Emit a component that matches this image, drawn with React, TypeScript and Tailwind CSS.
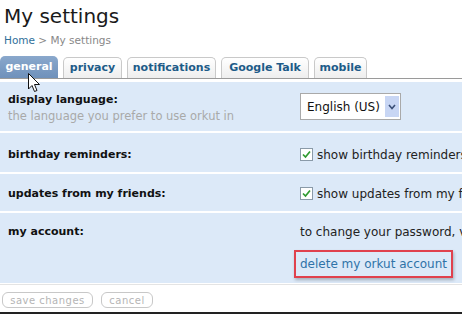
import React from 'react';

const tabs = [
  { name: 'general', w: 'w-[58px]' },
  { name: 'privacy', w: 'w-[59px]' },
  { name: 'notifications', w: 'w-[89px]' },
  { name: 'Google Talk', w: 'w-[88px]' },
  { name: 'mobile', w: 'w-[53px]' },
];

function Checkbox() {
  return (
    <span className="inline-flex items-center justify-center w-[13px] h-[13px] border border-[#8a9aa8] bg-white mr-[4px] shrink-0">
      <svg width="9" height="9" viewBox="0 0 9 9">
        <path d="M1 4.5 L3.5 7 L8 1.5" fill="none" stroke="#2f9a2f" strokeWidth="1.7" />
      </svg>
    </span>
  );
}

export default function App() {
  return (
    <div className="relative w-[462px] h-[314px] overflow-hidden bg-white font-['DejaVu_Sans',sans-serif] border-b-2 border-[#222]">
      {/* header */}
      <div className="pl-[4px] pt-[2px]">
        <h1 className="text-[20px] leading-[28px] text-[#1a1a1a]">My settings</h1>
        <div className="text-[10.5px] leading-[14px] mt-[3px] text-[#888]">
          <span className="text-[#2f6f9a]">Home</span> &gt; My settings
        </div>
      </div>

      {/* tabs */}
      <div className="flex items-end gap-[5px] mt-[9px] h-[23px] border-b border-[#9a9a9a]">
        {tabs.map((t, i) =>
          i === 0 ? (
            <div
              key={t.name}
              className={`${t.w} h-[22px] flex items-center justify-center rounded-t-[5px] bg-gradient-to-b from-[#8aa8cc] to-[#6f91bb] text-white font-bold text-[11px]`}
            >
              {t.name}
            </div>
          ) : (
            <div
              key={t.name}
              className={`${t.w} h-[21px] flex items-center justify-center rounded-t-[5px] border border-b-0 border-[#c9c9c9] bg-gradient-to-b from-white to-[#eeeeee] text-[#1d5b88] font-bold text-[11px]`}
            >
              {t.name}
            </div>
          )
        )}
      </div>

      {/* settings rows */}
      <div className="flex flex-col gap-[2px] mt-[3px] text-[11px]">
        <div className="flex h-[49px] bg-[#dce9f8]">
          <div className="w-[300px] shrink-0 pl-[8px] pt-[11px]">
            <div className="font-bold text-[#111] leading-[14px]">display language:</div>
            <div className="text-[#a9a9a9] text-[11.5px] leading-[15px] mt-[2px] whitespace-nowrap">the language you prefer to use orkut in</div>
          </div>
          <div className="pt-[11px]">
            <div className="flex items-center w-[101px] h-[27px] border border-[#a9a9a9] bg-white pl-[6px] pr-[1px]">
              <span className="text-[12px] text-[#111] flex-1">English (US)</span>
              <span className="w-[14px] h-[21px] bg-[#c8d6f4] flex items-center justify-center">
                <svg width="8" height="6" viewBox="0 0 8 6">
                  <path d="M1 1 L4 4.5 L7 1" fill="none" stroke="#3a4f78" strokeWidth="1.6" />
                </svg>
              </span>
            </div>
          </div>
        </div>

        <div className="flex h-[39px] bg-[#dce9f8]">
          <div className="w-[300px] shrink-0 pl-[8px] pt-[15px] font-bold text-[#111] leading-[14px]">birthday reminders:</div>
          <div className="pt-[15px] flex items-start whitespace-nowrap text-[#222] text-[12px] leading-[14px]">
            <Checkbox />
            show birthday reminders
          </div>
        </div>

        <div className="flex h-[37px] bg-[#dce9f8]">
          <div className="w-[300px] shrink-0 pl-[8px] pt-[13px] font-bold text-[#111] leading-[14px]">updates from my friends:</div>
          <div className="pt-[13px] flex items-start whitespace-nowrap text-[#222] text-[12px] leading-[14px]">
            <Checkbox />
            show updates from my friends
          </div>
        </div>

        <div className="flex h-[70px] bg-[#dce9f8]">
          <div className="w-[300px] shrink-0 pl-[8px] pt-[12px] font-bold text-[#111] leading-[14px]">my account:</div>
          <div className="pt-[12px] whitespace-nowrap leading-[14px] text-[12px]">
            <div className="text-[#222]">to change your password, visit your Google account</div>
            <div className="mt-[11px] -ml-[6px] inline-block border-2 border-[#e0414d] pl-[4px] pr-[4px] pt-[5px] pb-[5px] shadow-[1px_2px_3px_rgba(0,0,0,0.25)]">
              <span className="text-[#2f73a8]">delete my orkut account</span>
            </div>
          </div>
        </div>
      </div>

      {/* actions */}
      <div className="mt-[1px] border-t border-[#e4e4e4] pt-[7px] pl-[2px] flex gap-[8px] text-[10px]">
        <span className="h-[16px] w-[91px] flex items-center justify-center rounded-[6px] border border-[#c8c8c8] text-[#b5b5b5] tracking-[0.5px]">save changes</span>
        <span className="h-[16px] w-[52px] flex items-center justify-center rounded-[6px] border border-[#c8c8c8] text-[#b5b5b5] tracking-[0.5px]">cancel</span>
      </div>

      {/* mouse cursor */}
      <svg className="absolute left-[28px] top-[73px]" width="13" height="20" viewBox="0 0 13 20">
        <path d="M0.5 0.5 L0.5 16 L4 12.5 L6.5 18.5 L9 17.5 L6.5 11.5 L11.5 11.5 Z" fill="white" stroke="#111" strokeWidth="1" strokeLinejoin="round" />
      </svg>
    </div>
  );
}
